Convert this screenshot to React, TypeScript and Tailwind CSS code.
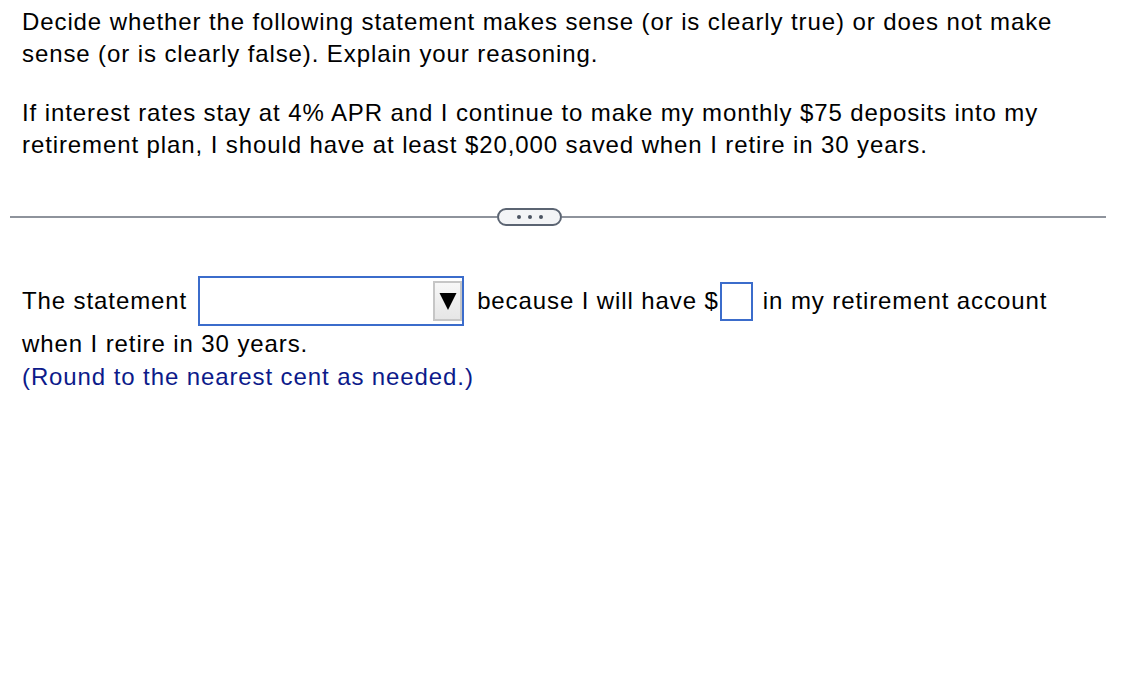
import React from "react";

const Dropdown = () => (
  <div className="ml-[11px] mr-[13px] w-[266px] h-[50px] border-2 border-[#3b6ccb] bg-white flex items-center justify-end">
    <div className="w-[29px] h-[40px] border-2 border-[#c6c6c6] bg-gradient-to-b from-[#f7f7f7] to-[#e6e6e6] flex items-center justify-center">
      <svg width="18" height="19" viewBox="0 0 18 19">
        <path d="M0.5 1 L17.5 1 L9 18 Z" fill="#000" />
      </svg>
    </div>
  </div>
);

export default function App() {
  return (
    <div className="min-h-[696px] bg-white text-black font-['Liberation_Sans',Arial,sans-serif] text-[24px] leading-[32px] tracking-[0.9px]">
      <div className="px-[22px] pt-[6px]">
        <p>
          Decide whether the following statement makes sense (or is clearly true) or does not make
          <br />
          sense (or is clearly false). Explain your reasoning.
        </p>
        <p className="mt-[27px]">
          If interest rates stay at 4% APR and I continue to make my monthly $75 deposits into my
          <br />
          retirement plan, I should have at least $20,000 saved when I retire in 30 years.
        </p>
      </div>

      <div className="mt-[47px] pl-[10px] pr-[38px] flex items-center">
        <div className="w-[487px] h-[2px] bg-[#8e939c]" />
        <div className="w-[65px] h-[18px] rounded-full border-2 border-[#5b6472] bg-[#f3f4f6] flex items-center justify-center gap-[7px]">
          <span className="w-[4px] h-[4px] rounded-full bg-[#4b5361]" />
          <span className="w-[4px] h-[4px] rounded-full bg-[#4b5361]" />
          <span className="w-[4px] h-[4px] rounded-full bg-[#4b5361]" />
        </div>
        <div className="flex-1 h-[2px] bg-[#8e939c]" />
      </div>

      <div className="px-[22px] mt-[50px]">
        <div className="flex items-center h-[50px]">
          <span>The statement</span>
          <Dropdown />
          <span>because I will have $</span>
          <span className="ml-[1px] mr-[10px] w-[33px] h-[39px] border-2 border-[#3b6ccb] bg-white" />
          <span>in my retirement account</span>
        </div>
        <p className="mt-[1px] leading-[33px]">when I retire in 30 years.</p>
        <p className="leading-[33px] text-[#0c1a8a]">(Round to the nearest cent as needed.)</p>
      </div>
    </div>
  );
}
